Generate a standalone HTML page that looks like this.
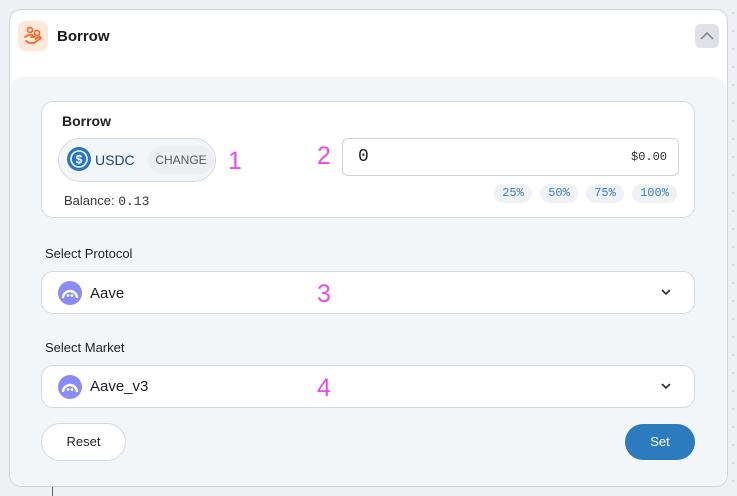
<!DOCTYPE html>
<html><head><style>
*{box-sizing:border-box;margin:0;padding:0}
body{width:737px;height:496px;background:#eef0f3;font-family:"Liberation Sans",sans-serif;position:relative;overflow:hidden;
background-image:radial-gradient(circle,#d3d6dc 1px,transparent 1.3px);background-size:18px 18px;background-position:4px 4px}
.abs{position:absolute}
.card{left:9px;top:9px;width:719px;height:478px;background:#fff;border:1px solid #d2d4d9;border-radius:12px}
.panel{left:10px;top:77px;width:716px;height:409px;background:#f3f6f9;border-radius:12px 12px 11px 11px}
.box{background:#fff;border:1px solid #d5d8dd;border-radius:12px}
.mono{font-family:"Liberation Mono",monospace}
.chip{top:184px;height:19px;background:#eef1f5;border-radius:10px;color:#3f7fbf;font-size:12px;text-align:center;line-height:19px}
.pink{color:#e64ce8;font-size:25px}
.lbl{font-size:13px;color:#1c1f25}
.sel{left:41px;width:654px;height:43px;background:#fff;border:1px solid #d5d8dd;border-radius:12px}
</style></head><body>
<div class="abs card"></div>
<div class="abs" style="left:18px;top:21px;width:30px;height:30px;background:#fde8da;border-radius:7px">
<svg width="30" height="30" viewBox="0 0 30 30" fill="none" stroke="#ef6d2c" stroke-width="1.8" stroke-linecap="round" stroke-linejoin="round"><circle cx="12" cy="9" r="2.5"/><circle cx="19" cy="12" r="2.5"/><path d="M7 16l3 -2h4l3 2h-4M8 20l3 2h5l7-5-1.5-1.5-4 2.5"/></svg></div>
<div class="abs" style="left:57px;top:28px;font-size:15px;font-weight:bold;color:#17191d">Borrow</div>
<div class="abs" style="left:695px;top:24px;width:24px;height:24px;background:#dfe1e6;border-radius:6px">
<svg width="24" height="24"><path d="M6 15l6-6 6 6" stroke="#8a8d95" stroke-width="1.8" fill="none"/></svg></div>
<div class="abs panel"></div>
<div class="abs box" style="left:41px;top:101px;width:654px;height:117px"></div>
<div class="abs" style="left:62px;top:113px;font-size:14px;font-weight:bold;color:#1c1f25">Borrow</div>
<div class="abs" style="left:58px;top:138px;width:158px;height:44px;background:#f3f6f9;border:1px solid #d5d8dd;border-radius:22px"></div>
<div class="abs" style="left:67px;top:147px;width:24px;height:24px;border-radius:50%;background:#2775ca">
<svg width="24" height="24"><circle cx="12" cy="12" r="8" stroke="#fff" stroke-width="1.6" fill="none"/><text x="12" y="16.5" font-size="12" font-weight="bold" fill="#fff" text-anchor="middle" font-family="Liberation Sans">$</text></svg></div>
<div class="abs" style="left:95px;top:152px;font-size:14px;color:#1d3f8f">USDC</div>
<div class="abs" style="left:148px;top:146px;width:66px;height:28px;background:#eceef1;border-radius:14px;font-size:12px;color:#55585f;text-align:center;line-height:28px">CHANGE</div>
<div class="abs pink" style="left:228px;top:147px">1</div>
<div class="abs" style="left:64px;top:193px;font-size:13px;color:#33363c">Balance: <span class="mono">0.13</span></div>
<div class="abs pink" style="left:317px;top:142px">2</div>
<div class="abs" style="left:342px;top:138px;width:337px;height:38px;background:#fff;border:1px solid #cfd2d8;border-radius:6px"></div>
<div class="abs mono" style="left:358px;top:147px;font-size:18px;color:#1c1f25">0</div>
<div class="abs mono" style="left:631px;top:150px;font-size:12px;color:#2c2f35">$0.00</div>
<div class="abs chip mono" style="left:494px;width:38px">25%</div>
<div class="abs chip mono" style="left:540px;width:38px">50%</div>
<div class="abs chip mono" style="left:586px;width:38px">75%</div>
<div class="abs chip mono" style="left:632px;width:45px">100%</div>
<div class="abs lbl" style="left:45px;top:246px">Select Protocol</div>
<div class="abs sel" style="top:271px"></div>
<div class="abs" style="left:58px;top:281px"><svg width="24" height="24"><circle cx="12" cy="12" r="12" fill="#8b8bf5"/><path d="M5 17a7 7 0 0 1 14 0" stroke="#fff" stroke-width="2.4" fill="none"/><circle cx="10" cy="14.5" r="1.4" fill="#fff"/><circle cx="14" cy="14.5" r="1.4" fill="#fff"/></svg></div>
<div class="abs" style="left:90px;top:285px;font-size:15px;color:#1c1f25">Aave</div>
<div class="abs pink" style="left:317px;top:280px">3</div>
<div class="abs" style="left:659px;top:285px"><svg width="14" height="14"><path d="M3 5l4 4 4-4" stroke="#2a2d33" stroke-width="1.6" fill="none"/></svg></div>
<div class="abs lbl" style="left:45px;top:340px">Select Market</div>
<div class="abs sel" style="top:365px"></div>
<div class="abs" style="left:58px;top:375px"><svg width="24" height="24"><circle cx="12" cy="12" r="12" fill="#8b8bf5"/><path d="M5 17a7 7 0 0 1 14 0" stroke="#fff" stroke-width="2.4" fill="none"/><circle cx="10" cy="14.5" r="1.4" fill="#fff"/><circle cx="14" cy="14.5" r="1.4" fill="#fff"/></svg></div>
<div class="abs" style="left:90px;top:378px;font-size:15px;color:#1c1f25">Aave_v3</div>
<div class="abs pink" style="left:317px;top:374px">4</div>
<div class="abs" style="left:659px;top:379px"><svg width="14" height="14"><path d="M3 5l4 4 4-4" stroke="#2a2d33" stroke-width="1.6" fill="none"/></svg></div>
<div class="abs" style="left:41px;top:423px;width:85px;height:38px;background:#fff;border:1px solid #d5d8dd;border-radius:19px;font-size:13px;text-align:center;line-height:36px;color:#1c1f25">Reset</div>
<div class="abs" style="left:625px;top:424px;width:70px;height:36px;background:#2d7bbf;border-radius:18px;font-size:13px;text-align:center;line-height:36px;color:#fff">Set</div>
<div class="abs" style="left:52px;top:487px;width:1px;height:9px;background:#5b6070"></div>
</body></html>
